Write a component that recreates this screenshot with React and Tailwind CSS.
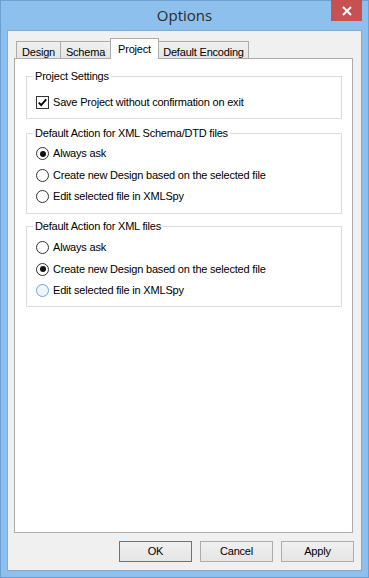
import React from "react";

function Checkbox() {
  return (
    <span className="w-[13px] h-[13px] border border-[#333333] bg-white flex items-center justify-center shrink-0">
      <svg width="11" height="11" viewBox="0 0 11 11">
        <path d="M1.8 5.6 L4.2 8.1 L9.2 2.4" stroke="#000" strokeWidth="1.9" fill="none" />
      </svg>
    </span>
  );
}

function Radio({ checked, focus }) {
  return (
    <span
      className={
        focus
          ? "w-[13px] h-[13px] rounded-full border border-[#6aa6de] bg-[#eef6fd] flex items-center justify-center shrink-0"
          : "w-[13px] h-[13px] rounded-full border border-[#333333] bg-white flex items-center justify-center shrink-0"
      }
    >
      {checked && <span className="w-[6px] h-[6px] rounded-full bg-[#111111]" />}
    </span>
  );
}

function Row({ h, children, label }) {
  return (
    <div className={"flex items-center gap-[4px] pl-[9px] " + h}>
      {children}
      <span>{label}</span>
    </div>
  );
}

function Group({ title, className, children }) {
  return (
    <fieldset className={"border border-[#dcdcdc] p-0 m-0 min-w-0 " + className}>
      <legend className="ml-[6px] px-[2px] leading-[14px]">{title}</legend>
      {children}
    </fieldset>
  );
}

function Tab({ label, w, selected, first }) {
  if (selected) {
    return (
      <div
        className={
          "relative z-10 h-[21px] mb-[-1px] ml-[-1px] bg-white border border-b-0 border-[#acacac] flex justify-center pt-[2px] " +
          w
        }
      >
        {label}
      </div>
    );
  }
  return (
    <div
      className={
        "h-[17px] bg-gradient-to-b from-[#f0f0f0] to-[#e5e5e5] border border-b-0 border-[#acacac] flex justify-center pt-[2px] " +
        w +
        (first ? "" : " ml-[-1px]")
      }
    >
      {label}
    </div>
  );
}

function Btn({ label, focus }) {
  return (
    <div
      className={
        "w-[73px] h-[21px] flex items-center justify-center bg-gradient-to-b from-[#f0f0f0] to-[#e5e5e5] border " +
        (focus ? "border-[#3c7fb1]" : "border-[#acacac]")
      }
    >
      {label}
    </div>
  );
}

export default function App() {
  return (
    <div className="relative w-[369px] h-[578px] bg-[#8dc0ec] border border-[#6d9fd2] flex flex-col font-['Liberation_Sans',Arial,sans-serif] text-[11px] tracking-[-0.2px] text-black">
      <div className="h-[29px] flex justify-center pt-[4px]">
        <span className="font-['Open_Sans',sans-serif] text-[15px] leading-[20px] tracking-normal text-[#2b2b2b]">
          Options
        </span>
      </div>
      <div className="absolute top-[-1px] right-[6px] w-[31px] h-[21px] bg-[#c75050] flex items-center justify-center">
        <svg width="10" height="10" viewBox="0 0 10 10">
          <path d="M1 1 L9 9 M9 1 L1 9" stroke="#fff" strokeWidth="2" />
        </svg>
      </div>
      <div className="mx-[6px] mb-[6px] border border-[#82abd4] bg-[#f0f0f0] flex-1 flex flex-col pt-[7px] pl-[6px]">
        <div className="h-[20px] flex items-end pl-[2px]">
          <Tab label="Design" w="w-[45px]" first />
          <Tab label="Schema" w="w-[51px]" />
          <Tab label="Project" w="w-[49px]" selected />
          <Tab label="Default Encoding" w="w-[91px]" />
        </div>
        <div className="w-[339px] h-[475px] bg-white border border-[#acacac] pt-[10px] pl-[11px] pr-[10px]">
          <Group title="Project Settings">
            <div className="pt-[9px] pb-[5px]">
              <Row h="h-[21px]" label="Save Project without confirmation on exit">
                <Checkbox />
              </Row>
            </div>
          </Group>
          <Group title="Default Action for XML Schema/DTD files" className="mt-[7px]">
            <div className="pt-[3px] pb-[6px]">
              <Row h="h-[21px]" label="Always ask">
                <Radio checked />
              </Row>
              <Row h="h-[22px]" label="Create new Design based on the selected file">
                <Radio />
              </Row>
              <Row h="h-[21px]" label="Edit selected file in XMLSpy">
                <Radio />
              </Row>
            </div>
          </Group>
          <Group title="Default Action for XML files" className="mt-[5px]">
            <div className="pt-[4px] pb-[5px]">
              <Row h="h-[21px]" label="Always ask">
                <Radio />
              </Row>
              <Row h="h-[22px]" label="Create new Design based on the selected file">
                <Radio checked />
              </Row>
              <Row h="h-[21px]" label="Edit selected file in XMLSpy">
                <Radio focus />
              </Row>
            </div>
          </Group>
        </div>
        <div className="mt-[8px] flex justify-end gap-[8px] pr-[7px]">
          <Btn label="OK" focus />
          <Btn label="Cancel" />
          <Btn label="Apply" />
        </div>
      </div>
    </div>
  );
}
